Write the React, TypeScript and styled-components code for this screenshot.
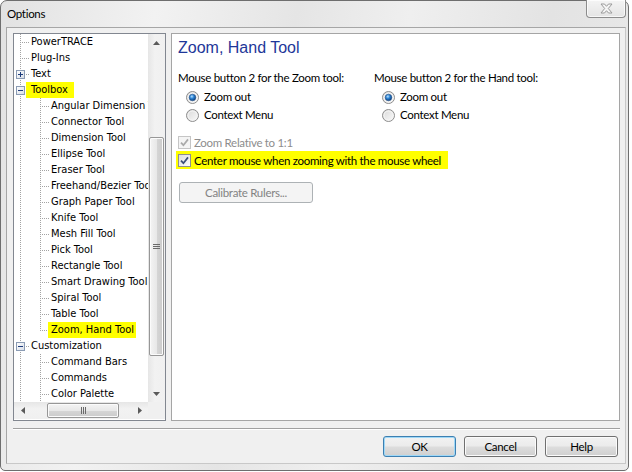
import styled, { createGlobalStyle } from 'styled-components';

const GlobalStyle = createGlobalStyle`
  html, body {
    margin: 0;
    padding: 0;
    background: #ffffff;
  }
  body {
    width: 632px;
    height: 472px;
    overflow: hidden;
    font-family: Lato, "Liberation Sans", Arial, sans-serif;
  }
`;

type TreeNode = {
  label: string;
  level: 0 | 1;
  expander?: 'plus' | 'minus';
  last?: boolean;
  mark?: [number, number];
};

const tree: TreeNode[] = [
  { label: 'PowerTRACE', level: 0 },
  { label: 'Plug-Ins', level: 0 },
  { label: 'Text', level: 0, expander: 'plus' },
  { label: 'Toolbox', level: 0, expander: 'minus', mark: [5, 6] },
  { label: 'Angular Dimension Tool', level: 1 },
  { label: 'Connector Tool', level: 1 },
  { label: 'Dimension Tool', level: 1 },
  { label: 'Ellipse Tool', level: 1 },
  { label: 'Eraser Tool', level: 1 },
  { label: 'Freehand/Bezier Tool', level: 1 },
  { label: 'Graph Paper Tool', level: 1 },
  { label: 'Knife Tool', level: 1 },
  { label: 'Mesh Fill Tool', level: 1 },
  { label: 'Pick Tool', level: 1 },
  { label: 'Rectangle Tool', level: 1 },
  { label: 'Smart Drawing Tool', level: 1 },
  { label: 'Spiral Tool', level: 1 },
  { label: 'Table Tool', level: 1 },
  { label: 'Zoom, Hand Tool', level: 1, last: true, mark: [3, 2] },
  { label: 'Customization', level: 0, expander: 'minus' },
  { label: 'Command Bars', level: 1 },
  { label: 'Commands', level: 1 },
  { label: 'Color Palette', level: 1 },
];

const Expander = ({ kind }: { kind: 'plus' | 'minus' }) => (
  <svg width="9" height="9" viewBox="0 0 9 9">
    <defs>
      <linearGradient id={`exp-${kind}`} x1="0" y1="0" x2="1" y2="1">
        <stop offset="0" stopColor="#ffffff" />
        <stop offset="1" stopColor="#d6dce6" />
      </linearGradient>
    </defs>
    <rect x="0.5" y="0.5" width="8" height="8" fill={`url(#exp-${kind})`} stroke="#8a9bb4" />
    <rect x="2" y="4" width="5" height="1" fill="#1d3c7c" />
    {kind === 'plus' && <rect x="4" y="2" width="1" height="5" fill="#1d3c7c" />}
  </svg>
);

const Radio = ({ checked }: { checked?: boolean }) => (
  <svg width="13" height="13" viewBox="0 0 13 13">
    <defs>
      <linearGradient id="radio-bg" x1="0" y1="0" x2="1" y2="1">
        <stop offset="0" stopColor="#d8d8d8" />
        <stop offset="1" stopColor="#fbfbfb" />
      </linearGradient>
      <radialGradient id="radio-dot" cx="0.4" cy="0.35" r="0.65">
        <stop offset="0" stopColor="#b9e2ff" />
        <stop offset="0.45" stopColor="#2f86d6" />
        <stop offset="1" stopColor="#0b3c78" />
      </radialGradient>
    </defs>
    <circle cx="6.5" cy="6.5" r="6" fill="url(#radio-bg)" stroke="#8d8d8d" />
    <circle cx="6.5" cy="6.5" r="4.5" fill="none" stroke="#f4f4f4" />
    {checked && <circle cx="6.5" cy="6.5" r="3.3" fill="url(#radio-dot)" stroke="#28568f" strokeWidth="0.6" />}
  </svg>
);

const Check = ({ disabled }: { disabled?: boolean }) => (
  <svg width="13" height="13" viewBox="0 0 13 13">
    <defs>
      <linearGradient id="check-bg" x1="0" y1="0" x2="1" y2="1">
        <stop offset="0" stopColor="#dcdcdc" />
        <stop offset="1" stopColor="#fdfdfd" />
      </linearGradient>
    </defs>
    <rect x="0.5" y="0.5" width="12" height="12" fill={disabled ? '#f4f4f4' : 'url(#check-bg)'} stroke={disabled ? '#c5c5c5' : '#8e8f8f'} />
    <path
      d="M3 6.6 L5.4 9.2 L10 3.4"
      fill="none"
      stroke={disabled ? '#a9a9a9' : '#3d4f78'}
      strokeWidth="1.7"
    />
  </svg>
);

const Arrow = ({ dir }: { dir: 'up' | 'down' | 'left' | 'right' }) => {
  const pts = {
    up: '0,4 7,4 3.5,0',
    down: '0,0 7,0 3.5,4',
    left: '4,0 4,7 0,3.5',
    right: '0,0 0,7 4,3.5',
  }[dir];
  const vertical = dir === 'up' || dir === 'down';
  return (
    <svg width={vertical ? 7 : 4} height={vertical ? 4 : 7}>
      <polygon points={pts} fill="#5a5a5a" />
    </svg>
  );
};

const Grip = ({ vertical }: { vertical?: boolean }) =>
  vertical ? (
    <svg width="7" height="5">
      <rect x="0" y="0" width="7" height="1" fill="#6a6a6a" />
      <rect x="0" y="2" width="7" height="1" fill="#6a6a6a" />
      <rect x="0" y="4" width="7" height="1" fill="#6a6a6a" />
    </svg>
  ) : (
    <svg width="5" height="7">
      <rect x="0" y="0" width="1" height="7" fill="#6a6a6a" />
      <rect x="2" y="0" width="1" height="7" fill="#6a6a6a" />
      <rect x="4" y="0" width="1" height="7" fill="#6a6a6a" />
    </svg>
  );

const CloseGlyph = () => (
  <svg width="13" height="11" viewBox="0 0 13 11">
    <path
      d="M1 1 H4.5 L6.5 3.3 L8.5 1 H12 L8.3 5.5 L12 10 H8.5 L6.5 7.7 L4.5 10 H1 L4.7 5.5 Z"
      fill="#f6f6f6"
      stroke="#9a9a9a"
      strokeWidth="1"
    />
  </svg>
);

const App = () => {
  return (
    <>
      <GlobalStyle />
      <Window>
        <TitleBar>
          <Title>Options</Title>
          <CloseButton>
            <CloseGlyph />
          </CloseButton>
        </TitleBar>

        <Client>
          <Main>
            {/* left tree */}
            <TreePanel>
              <TreeList>
                {tree.map((node) => (
                  <TreeRow key={node.label}>
                    {node.level === 1 && <Guide $v="full" />}
                    <Branch $v={node.last ? 'top' : 'full'}>
                      {node.expander && <Expander kind={node.expander} />}
                    </Branch>
                    <TreeLabel $mark={node.mark}>{node.label}</TreeLabel>
                  </TreeRow>
                ))}
              </TreeList>

              <VScroll>
                <ScrollButton>
                  <Arrow dir="up" />
                </ScrollButton>
                <VTrack>
                  <VThumb>
                    <Grip vertical />
                  </VThumb>
                </VTrack>
                <ScrollButton>
                  <Arrow dir="down" />
                </ScrollButton>
              </VScroll>

              <HScroll>
                <ScrollButton>
                  <Arrow dir="left" />
                </ScrollButton>
                <HTrack>
                  <HThumb>
                    <Grip />
                  </HThumb>
                </HTrack>
                <ScrollButton>
                  <Arrow dir="right" />
                </ScrollButton>
              </HScroll>
              <ScrollCorner />
            </TreePanel>

            {/* right page */}
            <Page>
              <PageTitle>Zoom, Hand Tool</PageTitle>
              <Columns>
                <Group>
                  <GroupLabel>Mouse button 2 for the Zoom tool:</GroupLabel>
                  <Option>
                    <Radio checked />
                    <span>Zoom out</span>
                  </Option>
                  <Option>
                    <Radio />
                    <span>Context Menu</span>
                  </Option>
                </Group>
                <Group>
                  <GroupLabel>Mouse button 2 for the Hand tool:</GroupLabel>
                  <Option>
                    <Radio checked />
                    <span>Zoom out</span>
                  </Option>
                  <Option>
                    <Radio />
                    <span>Context Menu</span>
                  </Option>
                </Group>
              </Columns>

              <Checks>
                <CheckRow $disabled>
                  <Check disabled />
                  <span>Zoom Relative to 1:1</span>
                </CheckRow>
                <CheckRow $mark>
                  <Check />
                  <span>Center mouse when zooming with the mouse wheel</span>
                </CheckRow>
              </Checks>

              <CalibrateButton disabled>Calibrate Rulers...</CalibrateButton>
            </Page>
          </Main>

          <Separator />

          <ButtonRow>
            <DialogButton $default>OK</DialogButton>
            <DialogButton>Cancel</DialogButton>
            <DialogButton>Help</DialogButton>
          </ButtonRow>
        </Client>
      </Window>
    </>
  );
};

const uiText = `
  font-size: 11.5px;
  letter-spacing: -0.3px;
`;

const Window = styled.div`
  box-sizing: border-box;
  width: 629px;
  height: 471px;
  border: 1px solid #6e6e6e;
  border-radius: 7px 7px 5px 5px;
  background: linear-gradient(
    100deg,
    #e2e2e2 0%,
    #f2f2f2 22%,
    #e5e5e5 42%,
    #efefef 58%,
    #e3e3e3 78%,
    #ebebeb 100%
  );
  display: flex;
  flex-direction: column;
  padding: 0 2px 6px 5px;
`;

const TitleBar = styled.div`
  height: 26px;
  display: flex;
  align-items: flex-start;
  flex-shrink: 0;
`;

const Title = styled.div`
  margin-left: 1px;
  line-height: 26px;
  ${uiText}
  color: #000;
`;

const CloseButton = styled.div`
  box-sizing: border-box;
  margin: -1px 0 0 auto;
  width: 40px;
  height: 18px;
  border: 1px solid #8c8c8c;
  border-top: none;
  border-radius: 0 0 4px 4px;
  background: linear-gradient(#f4f4f4, #e4e4e4);
  box-shadow: inset 0 0 0 1px rgba(255, 255, 255, 0.7);
  display: flex;
  align-items: center;
  justify-content: center;
`;

const Client = styled.div`
  flex: 1;
  display: flex;
  flex-direction: column;
  border: 1px solid #a6a6a6;
  border-bottom-color: #c8c8c8;
  border-right-color: #c8c8c8;
  background: #f0f0f0;
  padding: 5px 5px 6px 6px;
`;

const Main = styled.div`
  display: flex;
  gap: 5px;
  height: 388px;
`;

const TreePanel = styled.div`
  box-sizing: border-box;
  width: 153px;
  height: 388px;
  border: 1px solid #828790;
  background: #fff;
  display: grid;
  grid-template-columns: 134px 17px;
  grid-template-rows: 368px 17px;
`;

const TreeList = styled.div`
  overflow: hidden;
  white-space: nowrap;
`;

const TreeRow = styled.div`
  display: flex;
  height: 16px;
  align-items: stretch;
`;

const dots = '#a3a3a3';

const vLine = (v: 'full' | 'top') =>
  `repeating-linear-gradient(to bottom, ${dots} 0 1px, transparent 1px 2px) 6px 0 / 1px ${
    v === 'full' ? '16px' : '9px'
  } no-repeat`;

const Guide = styled.div<{ $v: 'full' | 'top' }>`
  width: 20px;
  flex-shrink: 0;
  background: ${({ $v }) => vLine($v)};
`;

const Branch = styled.div<{ $v: 'full' | 'top' }>`
  width: 17px;
  flex-shrink: 0;
  display: flex;
  align-items: center;
  padding-left: 2px;
  box-sizing: border-box;
  background: repeating-linear-gradient(to right, ${dots} 0 1px, transparent 1px 2px) 8px 8px / 8px 1px
      no-repeat,
    ${({ $v }) => vLine($v)};
`;

const TreeLabel = styled.span<{ $mark?: [number, number] }>`
  font-family: "DejaVu Sans Condensed", "DejaVu Sans", sans-serif;
  font-size: 11px;
  line-height: 16px;
  color: #000;
  background: ${({ $mark }) => ($mark ? '#ffff00' : 'transparent')};
  padding: ${({ $mark }) => ($mark ? `0 ${$mark[1]}px 0 ${$mark[0]}px` : '0')};
  margin-left: ${({ $mark }) => ($mark ? `-${$mark[0]}px` : '0')};
`;

const ScrollButton = styled.div`
  width: 17px;
  height: 17px;
  flex-shrink: 0;
  display: flex;
  align-items: center;
  justify-content: center;
`;

const VScroll = styled.div`
  display: flex;
  flex-direction: column;
  background: linear-gradient(to right, #e6e6e6, #f2f2f2 40%, #f0f0f0);
`;

const VTrack = styled.div`
  flex: 1;
  padding: 86px 1px 0 1px;
`;

const VThumb = styled.div`
  box-sizing: border-box;
  height: 219px;
  border: 1px solid #979797;
  border-radius: 2px;
  background: linear-gradient(to right, #f4f4f4, #e8e8e8 50%, #d6d6d6 51%, #cbcbcb);
  box-shadow: inset 0 0 0 1px #fbfbfb;
  display: flex;
  align-items: center;
  justify-content: center;
`;

const HScroll = styled.div`
  display: flex;
  background: linear-gradient(to bottom, #e6e6e6, #f2f2f2 40%, #f0f0f0);
`;

const HTrack = styled.div`
  flex: 1;
  padding: 1px 0 1px 16px;
`;

const HThumb = styled.div`
  box-sizing: border-box;
  width: 72px;
  height: 15px;
  border: 1px solid #979797;
  border-radius: 2px;
  background: linear-gradient(to bottom, #f4f4f4, #e8e8e8 50%, #d6d6d6 51%, #cbcbcb);
  box-shadow: inset 0 0 0 1px #fbfbfb;
  display: flex;
  align-items: center;
  justify-content: center;
`;

const ScrollCorner = styled.div`
  background: #f0f0f0;
`;

const Page = styled.div`
  flex: 1;
  box-sizing: border-box;
  border: 1px solid #a5a5a5;
  background: #fff;
  padding: 4px 6px 0 6px;
  display: flex;
  flex-direction: column;
  align-items: flex-start;
  ${uiText}
  color: #000;
`;

const PageTitle = styled.div`
  font-family: "Liberation Sans", Arial, sans-serif;
  font-size: 16px;
  letter-spacing: 0;
  line-height: 20px;
  color: #1e3799;
`;

const Columns = styled.div`
  display: flex;
  margin-top: 12px;
`;

const Group = styled.div`
  width: 196px;
  display: flex;
  flex-direction: column;
`;

const GroupLabel = styled.div`
  line-height: 16px;
  margin-bottom: 2px;
`;

const Option = styled.div`
  height: 18px;
  display: flex;
  align-items: center;
  gap: 5px;
  padding-left: 8px;
  line-height: 16px;
`;

const Checks = styled.div`
  margin-top: 9px;
  display: flex;
  flex-direction: column;
  align-items: flex-start;
`;

const CheckRow = styled.div<{ $disabled?: boolean; $mark?: boolean }>`
  height: 18px;
  display: flex;
  align-items: center;
  gap: 3px;
  color: ${({ $disabled }) => ($disabled ? '#8d8d8d' : '#000')};
  background: ${({ $mark }) => ($mark ? '#ffff00' : 'transparent')};
  margin-left: ${({ $mark }) => ($mark ? '-2px' : '0')};
  padding: ${({ $mark }) => ($mark ? '0 7px 0 2px' : '0')};
`;

const CalibrateButton = styled.button`
  margin: 13px 0 0 1px;
  box-sizing: border-box;
  width: 134px;
  height: 21px;
  border: 1px solid #adb2b5;
  border-radius: 3px;
  background: #f4f4f4;
  font-family: inherit;
  ${uiText}
  color: #838383;
  padding: 0;
`;

const Separator = styled.div`
  margin-top: 7px;
  height: 0;
  border-top: 1px solid #a0a0a0;
  border-bottom: 1px solid #ffffff;
`;

const ButtonRow = styled.div`
  margin-top: 6px;
  display: flex;
  justify-content: flex-end;
  gap: 8px;
  padding-right: 2px;
`;

const DialogButton = styled.button<{ $default?: boolean }>`
  box-sizing: border-box;
  width: 73px;
  height: 21px;
  padding: 0;
  border: 1px solid ${({ $default }) => ($default ? '#3c7fb1' : '#707070')};
  border-radius: 3px;
  background: linear-gradient(#f2f2f2 0%, #ebebeb 48%, #dddddd 52%, #cfcfcf 100%);
  box-shadow: inset 0 0 0 1px ${({ $default }) => ($default ? '#9fd8f7' : '#fbfbfb')};
  font-family: inherit;
  ${uiText}
  color: #000;
`;

export default App;
